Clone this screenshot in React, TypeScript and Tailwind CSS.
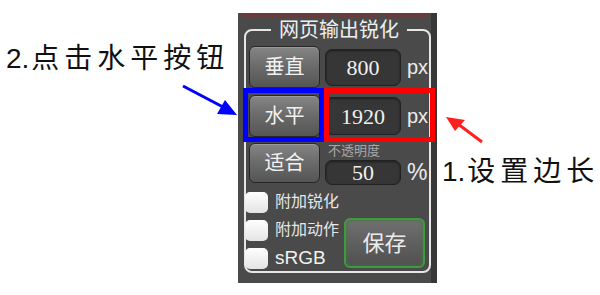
const cjk = { fontFamily: '"Liberation Sans", "Noto Sans CJK SC", sans-serif' };
const serif = { fontFamily: '"Liberation Serif", serif' };

function GrayButton({ label, h }: { label: string; h: string }) {
  return (
    <div
      className={`w-[71px] ${h} flex items-center justify-center rounded-[6px] border border-[#262626] bg-gradient-to-b from-[#858585] via-[#6a6a6a] to-[#555555] text-[20px] text-[#f2f2f2] shadow-[inset_0_1px_0_#9a9a9a]`}
      style={cjk}
    >
      {label}
    </div>
  );
}

function ValueBox({ value, h, size }: { value: string; h: string; size: string }) {
  return (
    <div
      className={`w-[76px] ${h} ${size} flex items-center justify-center rounded-[7px] border border-[#222] bg-[#363636] text-[#f0f0f0] shadow-[inset_0_1px_2px_#1e1e1e]`}
    >
      <span style={serif}>{value}</span>
    </div>
  );
}

function Check({ label, big }: { label: string; big?: boolean }) {
  return (
    <div className="flex items-center gap-[7px] h-[22px]">
      <div className="w-[23px] h-[21px] rounded-[5px] bg-gradient-to-b from-white to-[#e4e4e4]" />
      <span className={big ? 'text-[19px] text-[#f2f2f2]' : 'text-[16px] text-[#e6e6e6]'} style={cjk}>
        {label}
      </span>
    </div>
  );
}

export default function App() {
  return (
    <div className="w-[600px] h-[295px] bg-white flex overflow-hidden relative" style={cjk}>
      {/* left note */}
      <div className="w-[238px] pt-[42px] pl-[6px]">
        <p className="text-[28px] leading-[34px] text-[#111] whitespace-nowrap">
          2.<span className="tracking-[5px] ml-[2px]">点击水平按钮</span>
        </p>
      </div>

      {/* panel */}
      <div className="w-[199px] h-[270px] mt-[13px] bg-[#4a4a4a] border-r-[6px] border-[#383838] relative">
        <div className="flex h-[4px] gap-[4px] pl-[3px]">
          <div className="w-[92px] rounded-b-[3px] bg-[#6b3b3b]" />
          <div className="w-[43px] rounded-b-[3px] bg-[#6b3b3b]" />
          <div className="w-[45px] rounded-b-[3px] bg-[#6b3b3b]" />
        </div>

        <fieldset className="ml-[6px] mt-[3px] w-[187px] border-2 border-[#e6e6e6] rounded-[8px] pl-[3px] pt-[6px] pb-[2px]">
          <legend className="mx-auto px-[8px] text-[20px] leading-[20px] text-[#eeeeee]">网页输出锐化</legend>

          <div className="flex items-center gap-[5px]">
            <GrayButton label="垂直" h="h-[42px]" />
            <ValueBox value="800" h="h-[37px]" size="text-[22px]" />
            <span className="text-[20px] text-[#ececec] ml-[1px]">px</span>
          </div>

          <div className="flex items-center gap-[5px] mt-[7px]">
            <GrayButton label="水平" h="h-[42px]" />
            <ValueBox value="1920" h="h-[38px]" size="text-[22px]" />
            <span className="text-[20px] text-[#ececec] ml-[1px]">px</span>
          </div>

          <div className="flex items-start gap-[5px] mt-[6px]">
            <GrayButton label="适合" h="h-[40px]" />
            <div className="flex flex-col">
              <span className="text-[13px] leading-[16px] text-[#a8a8a8] pl-[3px]">不透明度</span>
              <div className="flex items-center gap-[6px] mt-[1px]">
                <ValueBox value="50" h="h-[25px]" size="text-[22px]" />
                <span className="text-[23px] leading-[25px] text-[#ececec]">%</span>
              </div>
            </div>
          </div>

          <div className="flex items-end mt-[6px]">
            <div className="flex flex-col gap-[6px] -ml-[4px]">
              <Check label="附加锐化" />
              <Check label="附加动作" />
              <Check label="sRGB" big />
            </div>
            <div
              className="ml-[5px] mb-[1px] w-[81px] h-[50px] flex items-center justify-center rounded-[6px] border-2 border-[#3f9a3f] bg-gradient-to-b from-[#707070] to-[#505050] text-[22px] text-[#ececec] shadow-[inset_0_0_4px_#3d7a3d]"
              style={cjk}
            >
              保存
            </div>
          </div>
        </fieldset>

        {/* highlight frames */}
        <div className="absolute left-[86px] top-[75px] w-[111px] h-[54px] border-[5px] border-[#ff0000]" />
        <div className="absolute left-[5px] top-[75px] w-[81px] h-[54px] border-[5px] border-[#0000ff]" />
      </div>

      {/* right note */}
      <div className="flex-1 pt-[155px] pl-[5px]">
        <p className="text-[28px] leading-[34px] text-[#111] whitespace-nowrap">
          1.<span className="tracking-[5px] ml-[2px]">设置边长</span>
        </p>
      </div>

      {/* arrows */}
      <svg className="absolute left-0 top-0 pointer-events-none" width="600" height="295">
        <line x1="183" y1="86" x2="223" y2="107" stroke="#0000ff" strokeWidth="3" />
        <polygon points="237,115 217,114 225,100" fill="#0000ff" />
        <line x1="482" y1="142" x2="458" y2="124" stroke="#ff2020" strokeWidth="3" />
        <polygon points="446,117 465,120 455,131" fill="#ff2020" />
      </svg>
    </div>
  );
}
